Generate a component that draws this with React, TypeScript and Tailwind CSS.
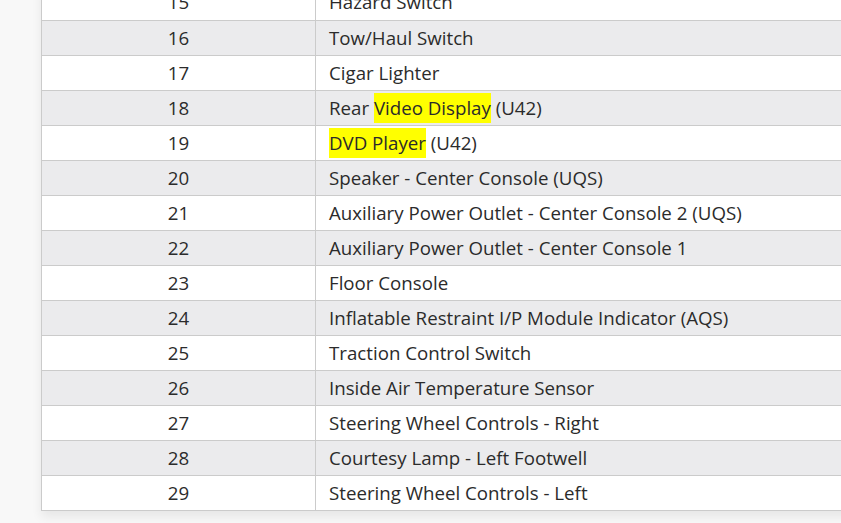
const rows: { no: number; parts: { text: string; mark?: boolean }[] }[] = [
  { no: 15, parts: [{ text: 'Hazard Switch' }] },
  { no: 16, parts: [{ text: 'Tow/Haul Switch' }] },
  { no: 17, parts: [{ text: 'Cigar Lighter' }] },
  { no: 18, parts: [{ text: 'Rear ' }, { text: 'Video Display', mark: true }, { text: ' (U42)' }] },
  { no: 19, parts: [{ text: 'DVD Player', mark: true }, { text: ' (U42)' }] },
  { no: 20, parts: [{ text: 'Speaker - Center Console (UQS)' }] },
  { no: 21, parts: [{ text: 'Auxiliary Power Outlet - Center Console 2 (UQS)' }] },
  { no: 22, parts: [{ text: 'Auxiliary Power Outlet - Center Console 1' }] },
  { no: 23, parts: [{ text: 'Floor Console' }] },
  { no: 24, parts: [{ text: 'Inflatable Restraint I/P Module Indicator (AQS)' }] },
  { no: 25, parts: [{ text: 'Traction Control Switch' }] },
  { no: 26, parts: [{ text: 'Inside Air Temperature Sensor' }] },
  { no: 27, parts: [{ text: 'Steering Wheel Controls - Right' }] },
  { no: 28, parts: [{ text: 'Courtesy Lamp - Left Footwell' }] },
  { no: 29, parts: [{ text: 'Steering Wheel Controls - Left' }] },
];

export default function App() {
  return (
    <div className="w-[841px] h-[523px] overflow-hidden bg-[#f8f8f8] font-['Open_Sans',sans-serif] text-[18.7px] text-[#2b2b2b]">
      <div className="ml-[41px] -mt-[15px] w-[820px] bg-white border-l border-b border-[#cbcbcb] shadow-[0_6px_10px_rgba(0,0,0,0.07)]">
        {rows.map((r) => (
          <div
            key={r.no}
            className={`flex h-[35px] border-t border-[#cbcbcb] first:border-t-0 ${r.no % 2 === 0 ? 'bg-[#ebebed]' : 'bg-white'}`}
          >
            <div className="w-[274px] shrink-0 flex items-center justify-center border-r border-[#cbcbcb]">
              {r.no}
            </div>
            <div className="flex-1 flex items-center pl-[13px] whitespace-pre">
              {r.parts.map((p, i) =>
                p.mark ? (
                  <span key={i} className="bg-[#ffff00] py-[1px]">
                    {p.text}
                  </span>
                ) : (
                  <span key={i}>{p.text}</span>
                )
              )}
            </div>
          </div>
        ))}
      </div>
    </div>
  );
}
